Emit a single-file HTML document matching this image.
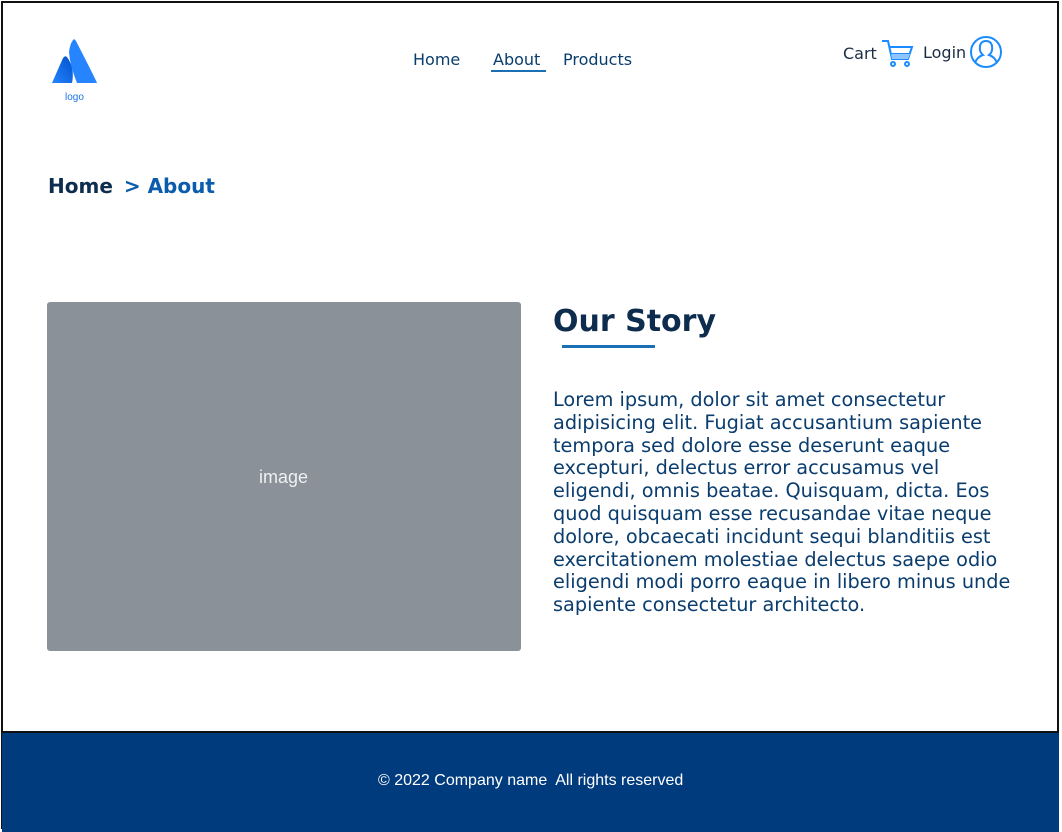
<!DOCTYPE html>
<html><head><style>
body{margin:0;width:1062px;height:832px;overflow:hidden;background:#fff;font-family:"DejaVu Sans",sans-serif;position:relative}
.frame{position:absolute;left:1px;top:1px;width:1058px;height:828px;border:2px solid #111;box-sizing:border-box}
.a{position:absolute;white-space:nowrap}
.nav{font-size:16px;color:#0a3d6e}
p{margin:0}
</style></head><body>
<div class="frame"></div>
<svg class="a" style="left:50px;top:38px" width="50" height="48" viewBox="0 0 50 48">
<defs><linearGradient id="g" x1="1" y1="0" x2="0" y2="1"><stop offset="0" stop-color="#0052cc"/><stop offset="1" stop-color="#2684ff"/></linearGradient></defs>
<path d="M17 19 Q15 17 13 20 L2 45 L22 45 Q25 30 17 19Z" fill="url(#g)"/>
<path d="M23 2 Q20 6 19 14 Q20 28 27 45 L47 45 Q46 42 26 3 Q24 0 23 2Z" fill="#2684ff"/>
</svg>
<div class="a" style="left:65px;top:92px;font:10px 'Liberation Sans',sans-serif;color:#1a73e8">logo</div>
<div class="a nav" style="left:413px;top:50px">Home</div>
<div class="a nav" style="left:493px;top:50px">About</div>
<div class="a" style="left:491px;top:70px;width:55px;height:2px;background:#1a6fb5"></div>
<div class="a nav" style="left:563px;top:50px">Products</div>
<div class="a nav" style="left:843px;top:44px;color:#1b2d45">Cart</div>
<svg class="a" style="left:880px;top:39px" width="34" height="30" viewBox="0 0 34 30" fill="none" stroke="#1a8cff" stroke-width="2">
<path d="M2 2 H8 L12 20 H28 L32 8 H9"/><path d="M11 15 H30" /><path d="M11 15 L12 20 H28 L30 15Z" fill="#8ec5ff" stroke="none"/><circle cx="13" cy="25" r="2"/><circle cx="27" cy="25" r="2"/></svg>
<div class="a nav" style="left:923px;top:43px;color:#1b2d45">Login</div>
<svg class="a" style="left:969px;top:35px" width="34" height="34" viewBox="0 0 34 34" fill="none" stroke="#1a8cff" stroke-width="2">
<circle cx="17" cy="17" r="15"/><path d="M6 28 Q8 22 14 20 Q10 17 11 11 Q12 6 17 6 Q22 6 23 11 Q24 17 20 20 Q26 22 28 28"/></svg>
<div class="a" style="left:48px;top:174px;font-size:20px;font-weight:bold;color:#0d2c4e">Home <span style="color:#0b5cad;margin-left:4px">&gt; About</span></div>
<div class="a" style="left:47px;top:302px;width:474px;height:349px;background:#8a9198;border-radius:3px"></div>
<div class="a" style="left:259px;top:467px;font:18px 'Liberation Sans',sans-serif;color:#eef0f2">image</div>
<div class="a" style="left:553px;top:304px;font-size:30px;font-weight:bold;color:#0d2c4e">Our Story</div>
<div class="a" style="left:562px;top:345px;width:93px;height:3px;background:#1a6fb5"></div>
<p class="a" style="left:553px;top:389px;font-size:19.3px;line-height:22.8px;color:#0a3d6e">Lorem ipsum, dolor sit amet consectetur<br>adipisicing elit. Fugiat accusantium sapiente<br>tempora sed dolore esse deserunt eaque<br>excepturi, delectus error accusamus vel<br>eligendi, omnis beatae. Quisquam, dicta. Eos<br>quod quisquam esse recusandae vitae neque<br>dolore, obcaecati incidunt sequi blanditiis est<br>exercitationem molestiae delectus saepe odio<br>eligendi modi porro eaque in libero minus unde<br>sapiente consectetur architecto.</p>
<div class="a" style="left:2px;top:731px;width:1057px;height:99px;background:#003b7d;border-top:2px solid #111"></div>
<div class="a" style="left:378px;top:772px;font:16px 'Liberation Sans',sans-serif;color:#fff">© 2022 Company name&nbsp; All rights reserved</div>
</body></html>
